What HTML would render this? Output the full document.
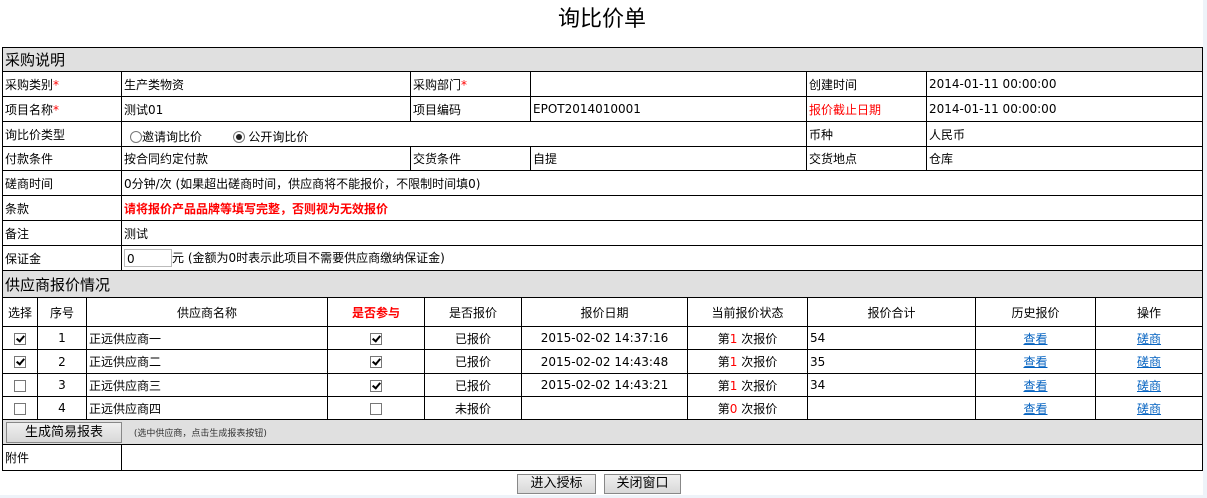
<!DOCTYPE html>
<html><head><meta charset="utf-8"><style>
body{margin:0;background:#fff;font-family:"DejaVu Sans","Noto Sans CJK SC",sans-serif;font-size:12px;color:#000;width:1207px;height:498px;overflow:hidden;position:relative}
.title{position:absolute;top:6px;left:0;width:1204px;text-align:center;font-size:22px;line-height:28px}
table{position:absolute;left:2px;border-collapse:collapse;table-layout:fixed;width:1200px}
td{border:1px solid #000;padding:0 0 0 2px;white-space:nowrap;overflow:hidden}
.sec{background:#e0e0e0;font-size:15px;padding-left:2px}
.red{color:#f00}
.c{text-align:center;padding:0}
.cb{display:inline-block;width:12px;height:12px;border:1px solid #777;background:#fff;vertical-align:middle;position:relative;box-sizing:border-box}
.cb.k::after{content:"";position:absolute;left:3px;top:0px;width:3px;height:6px;border:solid #000;border-width:0 2px 2px 0;transform:rotate(40deg)}
a{color:#0563c1;text-decoration:underline}
.btn{display:inline-block;border:1px solid #888;background:linear-gradient(#f0f0f0,#d8d8d8);font-size:12px;text-align:center;line-height:17px;box-sizing:border-box}
.rb{display:inline-block;width:12px;height:12px;border:1px solid #777;border-radius:50%;vertical-align:middle;position:relative;box-sizing:border-box;background:#fff}
.rb.on::after{content:"";position:absolute;left:2px;top:2px;width:6px;height:6px;border-radius:50%;background:#222}
</style></head><body>
<div class="title">询比价单</div>
<table style="top:47px">
<colgroup><col style="width:119px"><col style="width:289px"><col style="width:120px"><col style="width:276px"><col style="width:120px"><col style="width:276px"></colgroup>
<tr style="height:24px"><td colspan="6" class="sec">采购说明</td></tr>
<tr style="height:25px"><td>采购类别<span class="red">*</span></td><td>生产类物资</td><td>采购部门<span class="red">*</span></td><td></td><td>创建时间</td><td>2014-01-11 00:00:00</td></tr>
<tr style="height:25px"><td>项目名称<span class="red">*</span></td><td>测试01</td><td>项目编码</td><td>EPOT2014010001</td><td class="red">报价截止日期</td><td>2014-01-11 00:00:00</td></tr>
<tr style="height:25px"><td>询比价类型</td><td colspan="3" style="padding-left:8px;padding-top:4px"><span class="rb"></span>邀请询比价 &nbsp; &nbsp; &nbsp; &nbsp;<span class="rb on"></span> 公开询比价</td><td>币种</td><td>人民币</td></tr>
<tr style="height:24px"><td>付款条件</td><td>按合同约定付款</td><td>交货条件</td><td>自提</td><td>交货地点</td><td>仓库</td></tr>
<tr style="height:25px"><td>磋商时间</td><td colspan="5">0分钟/次 (如果超出磋商时间，供应商将不能报价，不限制时间填0)</td></tr>
<tr style="height:25px"><td>条款</td><td colspan="5" class="red" style="font-weight:bold">请将报价产品品牌等填写完整，否则视为无效报价</td></tr>
<tr style="height:25px"><td>备注</td><td colspan="5">测试</td></tr>
<tr style="height:25px"><td>保证金</td><td colspan="5"><span style="display:inline-block;width:48px;height:18px;border:1px solid #bbb;vertical-align:middle;line-height:18px;padding-left:2px;box-sizing:border-box">0</span>元 (金额为0时表示此项目不需要供应商缴纳保证金)</td></tr>
<tr style="height:27px"><td colspan="6" class="sec">供应商报价情况</td></tr>
</table>
<table style="top:297px">
<colgroup><col style="width:35px"><col style="width:49px"><col style="width:241px"><col style="width:97px"><col style="width:97px"><col style="width:166px"><col style="width:120px"><col style="width:168px"><col style="width:120px"><col style="width:107px"></colgroup>
<tr style="height:29px"><td class="c">选择</td><td class="c">序号</td><td class="c">供应商名称</td><td class="c red" style="font-weight:bold">是否参与</td><td class="c">是否报价</td><td class="c">报价日期</td><td class="c">当前报价状态</td><td class="c">报价合计</td><td class="c">历史报价</td><td class="c">操作</td></tr>
<tr style="height:23px"><td class="c"><span class="cb k"></span></td><td class="c">1</td><td>正远供应商一</td><td class="c"><span class="cb k"></span></td><td class="c">已报价</td><td class="c">2015-02-02 14:37:16</td><td class="c">第<span class="red">1</span> 次报价</td><td>54</td><td class="c"><a>查看</a></td><td class="c"><a>磋商</a></td></tr>
<tr style="height:24px"><td class="c"><span class="cb k"></span></td><td class="c">2</td><td>正远供应商二</td><td class="c"><span class="cb k"></span></td><td class="c">已报价</td><td class="c">2015-02-02 14:43:48</td><td class="c">第<span class="red">1</span> 次报价</td><td>35</td><td class="c"><a>查看</a></td><td class="c"><a>磋商</a></td></tr>
<tr style="height:23px"><td class="c"><span class="cb"></span></td><td class="c">3</td><td>正远供应商三</td><td class="c"><span class="cb k"></span></td><td class="c">已报价</td><td class="c">2015-02-02 14:43:21</td><td class="c">第<span class="red">1</span> 次报价</td><td>34</td><td class="c"><a>查看</a></td><td class="c"><a>磋商</a></td></tr>
<tr style="height:23px"><td class="c"><span class="cb"></span></td><td class="c">4</td><td>正远供应商四</td><td class="c"><span class="cb"></span></td><td class="c">未报价</td><td class="c"></td><td class="c">第<span class="red">0</span> 次报价</td><td></td><td class="c"><a>查看</a></td><td class="c"><a>磋商</a></td></tr>
</table>
<table style="top:419px">
<colgroup><col style="width:119px"><col style="width:1081px"></colgroup>
<tr style="height:25px"><td colspan="2" style="background:#e0e0e0;padding-left:3px"><span class="btn" style="width:116px;height:21px;font-size:13px;line-height:19px">生成简易报表</span> <span style="font-size:9px;color:#333;margin-left:8px">(选中供应商，点击生成报表按钮)</span></td></tr>
<tr style="height:26px"><td>附件</td><td></td></tr>
</table>
<span class="btn" style="position:absolute;left:517px;top:474px;width:79px;height:20px;font-size:13px">进入授标</span>
<span class="btn" style="position:absolute;left:604px;top:474px;width:77px;height:20px;font-size:13px">关闭窗口</span>
<div style="position:absolute;right:0;top:0;width:4px;height:498px;background:#eef3f9"></div>
<div style="position:absolute;left:0;bottom:0;width:1207px;height:3px;background:#eef3f9"></div>
</body></html>
